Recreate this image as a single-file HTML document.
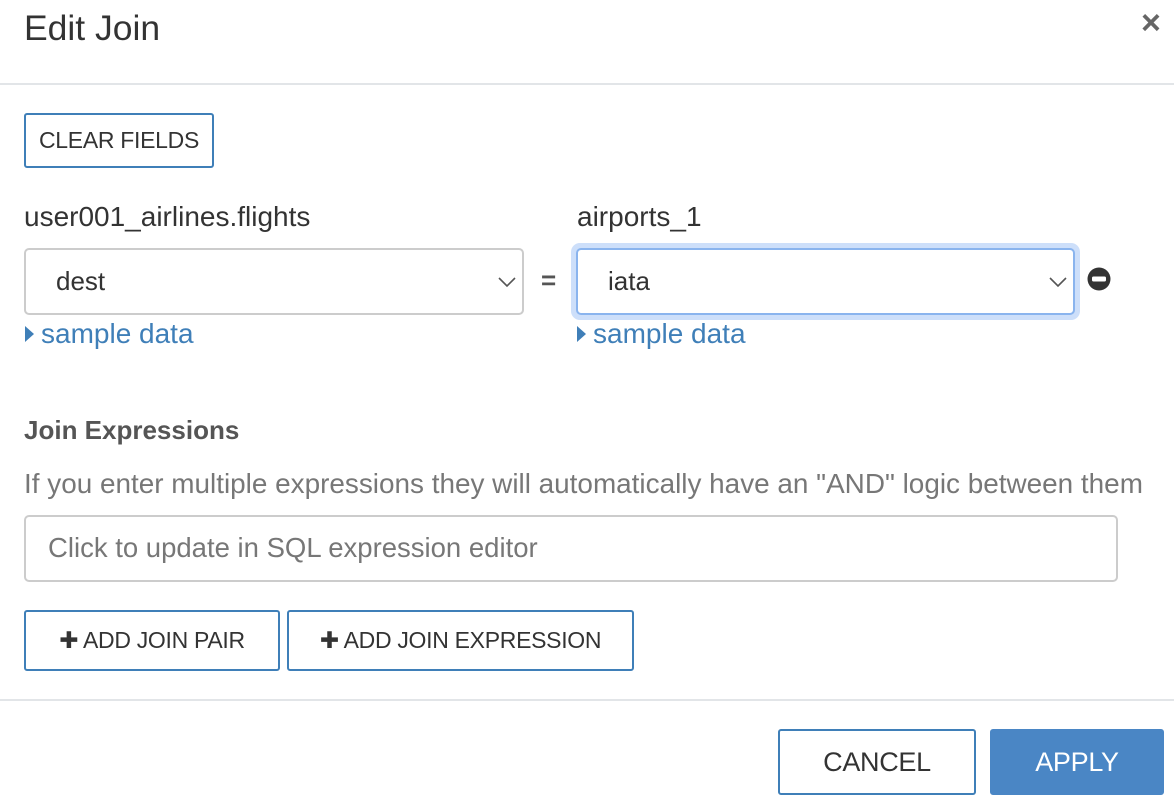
<!DOCTYPE html>
<html><head><style>
*{box-sizing:border-box;margin:0;padding:0}
body{width:1174px;height:802px;background:#fff;font-family:"Liberation Sans",sans-serif;color:#333;position:relative;overflow:hidden}
.a{position:absolute}
.t{position:absolute;white-space:nowrap}
.btn{position:absolute;border:2px solid #3f7fb8;border-radius:3px;background:#fff;color:#333;font-size:23px;display:flex;align-items:center;justify-content:center;letter-spacing:-0.3px}
.sel{position:absolute;border:2px solid #ccc;border-radius:5px;background:#fff;font-size:26px;padding-left:30px;display:flex;align-items:center;color:#333}
.link{color:#3f7fb8;font-size:28px}
</style></head><body>
<div class="t" style="left:24px;top:8px;font-size:35.5px;color:#333">Edit Join</div>
<div class="t" style="left:1141px;top:4px;font-size:34px;color:#666;font-weight:bold">×</div>
<div class="a" style="left:0;top:83px;width:1174px;height:2px;background:#e2e5e8"></div>
<div class="btn" style="left:24px;top:113px;width:190px;height:55px">CLEAR FIELDS</div>
<div class="t" style="left:24px;top:201px;font-size:28px">user001_airlines.flights</div>
<div class="t" style="left:577px;top:201px;font-size:28px">airports_1</div>
<div class="sel" style="left:24px;top:248px;width:500px;height:67px">dest</div>
<svg class="a" style="left:497px;top:275px" width="20" height="14"><path d="M2 3l8 8 8-8" fill="none" stroke="#555" stroke-width="1.6"/></svg>
<div class="t" style="left:541px;top:265px;font-size:26px;font-weight:bold;color:#555">=</div>
<div class="a" style="left:571px;top:243px;width:509px;height:77px;border-radius:9px;background:#cddffa"></div>
<div class="sel" style="left:576px;top:248px;width:499px;height:67px;border-color:#8ab4ee">iata</div>
<svg class="a" style="left:1048px;top:275px" width="20" height="14"><path d="M2 3l8 8 8-8" fill="none" stroke="#555" stroke-width="1.6"/></svg>
<svg class="a" style="left:1086px;top:266px" width="26" height="26"><circle cx="13" cy="13" r="11.5" fill="#333"/><rect x="6" y="10.5" width="14" height="5" rx="1.5" fill="#fff"/></svg>
<svg class="a" style="left:24px;top:324px" width="12" height="20"><path d="M1 2l9 8-9 8z" fill="#3f7fb8"/></svg>
<div class="t link" style="left:41px;top:318px">sample data</div>
<svg class="a" style="left:576px;top:324px" width="12" height="20"><path d="M1 2l9 8-9 8z" fill="#3f7fb8"/></svg>
<div class="t link" style="left:593px;top:318px">sample data</div>
<div class="t" style="left:24px;top:415px;font-size:26px;font-weight:bold;color:#555">Join Expressions</div>
<div class="t" style="left:24px;top:468px;font-size:27.9px;color:#777">If you enter multiple expressions they will automatically have an "AND" logic between them</div>
<div class="a" style="left:24px;top:515px;width:1094px;height:67px;border:2px solid #ccc;border-radius:5px"></div>
<div class="t" style="left:48px;top:532px;font-size:27.5px;color:#777">Click to update in SQL expression editor</div>
<div class="btn" style="left:24px;top:610px;width:256px;height:61px">✚ ADD JOIN PAIR</div>
<div class="btn" style="left:287px;top:610px;width:347px;height:61px">✚ ADD JOIN EXPRESSION</div>
<div class="a" style="left:0;top:699px;width:1174px;height:2px;background:#e2e5e8"></div>
<div class="btn" style="left:778px;top:729px;width:198px;height:66px;font-size:27px">CANCEL</div>
<div class="btn" style="left:990px;top:729px;width:174px;height:66px;font-size:27px;background:#4a86c5;border-color:#4a86c5;color:#fff">APPLY</div>
</body></html>
